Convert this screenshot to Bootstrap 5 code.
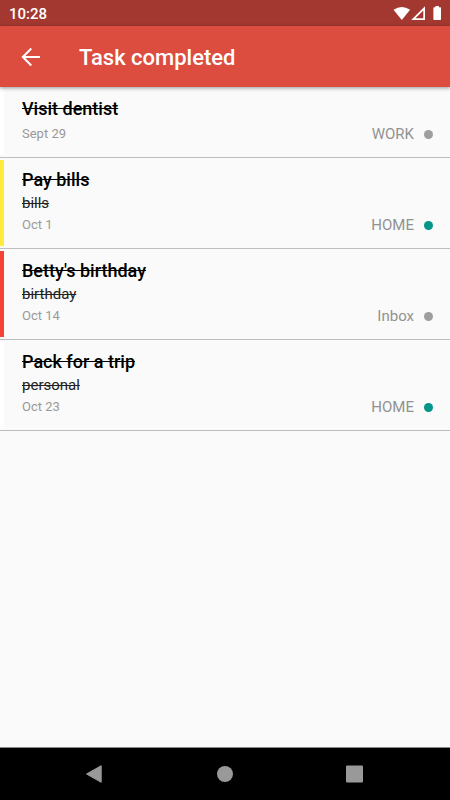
<!DOCTYPE html>
<html lang="en">
<head>
<meta charset="utf-8">
<meta name="viewport" content="width=device-width, initial-scale=1">
<title>Task completed</title>
<link href="https://cdn.jsdelivr.net/npm/bootstrap@5.3.0/dist/css/bootstrap.min.css" rel="stylesheet">
<style>
body { font-family: Roboto, "Liberation Sans", sans-serif; background: #fafafa; color: #000; }
.status-bar { height: 26px; background: #a33830; font-size: 15px; line-height: 26px; padding: 1px 8px 0 9px; font-weight: 500; }
.app-bar { height: 61px; background: #dc4c3f; box-shadow: 0 1px 4px rgba(0,0,0,.4); padding: 0 19px; z-index: 1; }
.app-title { font-size: 22px; line-height: 28px; font-weight: 500; margin: 2px 0 0 36px; }
.task { min-height: 71px; border-bottom: 1px solid #bdbdbd; padding: 2px 17px 2px 0; }
.stripe { width: 4px; background: #fff; }
.stripe-yellow { background: #ffeb3b; }
.stripe-red { background: #f44336; }
.task-body { padding: 8px 0 11px 18px; }
.task-title { font-size: 18px; line-height: 24px; font-weight: 500; }
.task-note { font-size: 15px; line-height: 23px; color: #222; }
.task-meta { line-height: 20px; color: #999; }
.task-date { font-size: 13px; }
.task-list { font-size: 15px; color: #929292; gap: 10px; }
.dot { width: 9px; height: 9px; background: #9e9e9e; }
.dot-teal { background: #009688; }
.system-nav { height: 53px; background: #000; border-top: 1px solid #888; padding: 0 85px; }
</style>
<script src="https://cdn.jsdelivr.net/npm/bootstrap@5.3.0/dist/js/bootstrap.bundle.min.js" defer></script>
</head>
<body>
<div class="d-flex flex-column min-vh-100">
  <div class="status-bar d-flex justify-content-between align-items-center text-white">
    <span>10:28</span>
    <svg width="50" height="16" viewBox="0 0 50 16" fill="#fff" aria-hidden="true">
      <path d="M1.500 3.800Q9.800-2 18.100 3.800L9.800 13.900Z"/>
      <path fill-rule="evenodd" d="M33 .3V14H19.200ZM31.300 4.500V12.300H23.400Z"/>
      <path d="M43.500 0h3.400v1.300h1.500q.6 0 .6.700v11.300q0 .7-.7.700h-6.200q-.7 0-.7-.7V2q0-.7.7-.7h1.400Z"/>
    </svg>
  </div>
  <header class="app-bar d-flex align-items-center text-white position-relative">
    <button type="button" class="btn p-0 border-0 d-flex text-white" aria-label="Back">
      <svg width="24" height="24" viewBox="0 0 24 24" fill="none" stroke="currentColor" stroke-width="2" aria-hidden="true"><path d="M21 12H4.500M12.300 3.500L3.800 12L12.300 20.500"/></svg>
    </button>
    <h1 class="app-title">Task completed</h1>
  </header>
  <main class="flex-grow-1">
    <ul class="list-unstyled mb-0">
      <li class="task d-flex">
        <span class="stripe flex-shrink-0"></span>
        <div class="task-body flex-grow-1 d-flex flex-column justify-content-between">
          <div class="task-title text-decoration-line-through">Visit dentist</div>
          <div class="task-meta d-flex justify-content-between align-items-center">
            <span class="task-date">Sept 29</span>
            <span class="task-list d-flex align-items-center">WORK <span class="dot rounded-circle"></span></span>
          </div>
        </div>
      </li>
      <li class="task d-flex">
        <span class="stripe stripe-yellow flex-shrink-0"></span>
        <div class="task-body flex-grow-1">
          <div class="task-title text-decoration-line-through">Pay bills</div>
          <div class="task-note text-decoration-line-through">bills</div>
          <div class="task-meta d-flex justify-content-between align-items-center">
            <span class="task-date">Oct 1</span>
            <span class="task-list d-flex align-items-center">HOME <span class="dot dot-teal rounded-circle"></span></span>
          </div>
        </div>
      </li>
      <li class="task d-flex">
        <span class="stripe stripe-red flex-shrink-0"></span>
        <div class="task-body flex-grow-1">
          <div class="task-title text-decoration-line-through">Betty's birthday</div>
          <div class="task-note text-decoration-line-through">birthday</div>
          <div class="task-meta d-flex justify-content-between align-items-center">
            <span class="task-date">Oct 14</span>
            <span class="task-list d-flex align-items-center">Inbox <span class="dot rounded-circle"></span></span>
          </div>
        </div>
      </li>
      <li class="task d-flex">
        <span class="stripe flex-shrink-0"></span>
        <div class="task-body flex-grow-1">
          <div class="task-title text-decoration-line-through">Pack for a trip</div>
          <div class="task-note text-decoration-line-through">personal</div>
          <div class="task-meta d-flex justify-content-between align-items-center">
            <span class="task-date">Oct 23</span>
            <span class="task-list d-flex align-items-center">HOME <span class="dot dot-teal rounded-circle"></span></span>
          </div>
        </div>
      </li>
    </ul>
  </main>
  <nav class="system-nav d-flex justify-content-between align-items-center" aria-label="System">
    <button type="button" class="btn p-0 border-0 d-flex" aria-label="Back"><svg width="20" height="20" viewBox="0 0 20 20" fill="#999" stroke="#999" stroke-linejoin="round"><path d="M1.500 10L16.200 1.700V18.300Z"/></svg></button>
    <button type="button" class="btn p-0 border-0 d-flex" aria-label="Home"><svg width="20" height="20" viewBox="0 0 20 20" fill="#999"><circle cx="10" cy="10" r="8"/></svg></button>
    <button type="button" class="btn p-0 border-0 d-flex" aria-label="Recent apps"><svg width="20" height="20" viewBox="0 0 20 20" fill="#999"><rect x="1" y="1.500" width="17" height="17" rx="1"/></svg></button>
  </nav>
</div>
</body>
</html>
